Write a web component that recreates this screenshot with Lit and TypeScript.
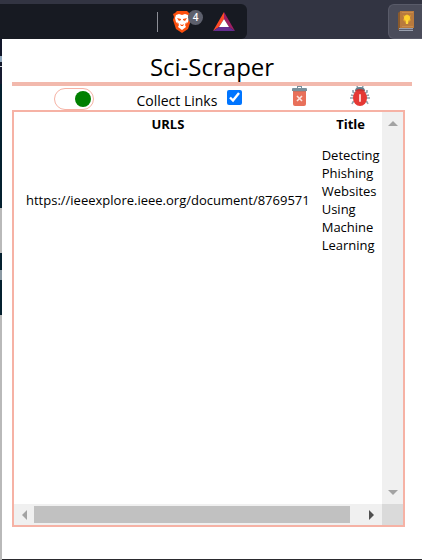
import { LitElement, html, css, svg } from "lit";
import { customElement, property, state } from "lit/decorators.js";

const braveLogo = svg`
  <svg viewBox="0 0 20 24" width="20" height="24" aria-hidden="true">
    <path fill="#fb4f0e" d="M5 1h10l2 2 2 1-1 3 1 3-3 9-6 4-6-4L1 10l1-3-1-3 2-1z"/>
    <path fill="#fff" d="M4 5l3-1 3 1 3-1 3 1 1 3-1 4-3 3 1 2-4 3-4-3 1-2-3-3-1-4z"/>
    <path fill="#fb4f0e" d="M5 8l4 1v1l-2 1zM15 8l-4 1v1l2 1zM8 14l2 1 2-1-1 2H9zM5 12l2 2-1 1zM15 12l-2 2 1 1z"/>
  </svg>`;

const batLogo = svg`
  <svg viewBox="0 0 22 20" width="22" height="20" aria-hidden="true">
    <path fill="#ff4a26" d="M11 0v7l-5 8-6 4z"/>
    <path fill="#9e1f63" d="M11 0l11 19-6-4-5-8z"/>
    <path fill="#662d91" d="M0 19l6-4h10l6 4z"/>
    <path fill="#fff" d="M11 7l5 8H6z"/>
  </svg>`;

const bookIcon = svg`
  <svg viewBox="0 0 16 21" width="16" height="21" aria-hidden="true">
    <path fill="#8a5a2c" d="M1 1l2-1v17l-2 2H0V2z"/>
    <path fill="#b87a3d" d="M2 0h14v17H2z"/>
    <path fill="#c98b4b" d="M4 1h11v1H4zM4 15h11v1H4z"/>
    <path fill="#9aa0ae" d="M1 17h14v1H1zM1 19h14v1H1z"/>
    <path fill="#5d5f70" d="M1 18h14v1H1z"/>
    <path fill="#dd9f30" d="M5 4l2 1 2-2 2 2 2-1-1 3 1 2-2 2-1 2H8l-1-2-2-2 1-2z"/>
    <circle cx="9" cy="7" r="3" fill="#ffd02b"/>
    <path fill="#ffd93b" d="M8 9h2v4H8z"/>
  </svg>`;

const trashIcon = svg`
  <svg viewBox="0 0 20 20" width="20" height="20" aria-hidden="true">
    <path fill="#78909c" d="M9 0h5v2h4q1 0 1 1v2H4V3q0-1 1-1h4zm1 1v1h3V1z"/>
    <path fill="#e8705a" d="M5 5h13v13q0 2-2 2H7q-2 0-2-2z"/>
    <path fill="#c9705f" d="M5 5h13v1H5z"/>
    <path stroke="#fbe4df" stroke-width="1.600" d="M9 10l5 5M14 10l-5 5"/>
  </svg>`;

const bugIcon = svg`
  <svg viewBox="0 0 20 20" width="20" height="20" aria-hidden="true">
    <path fill="none" stroke="#90a4ae" stroke-width="1.600" d="M7 0l1 3M13 0l-1 3M3 4v2l3 2M17 4v2l-3 2M0 12h20M1 9l4 1M19 9l-4 1M2 18l1-2 3-1M18 18l-1-2-3-1"/>
    <path fill="#607d8b" d="M5 5q0-4 5-4t5 4z"/>
    <ellipse cx="10" cy="12" rx="7" ry="8" fill="#e53935"/>
    <path fill="#c6322f" d="M6 4q4-2 8 0l1 2q-5-2-10 0z"/>
    <rect x="9" y="8" width="2" height="8" rx="1" fill="#ffc9c6"/>
  </svg>`;

@customElement("browser-bar")
class BrowserBar extends LitElement {
  static styles = css`
    :host {
      display: flex;
      justify-content: space-between;
      height: 39px;
      background: #323442;
      font-family: "Open Sans", "Noto Sans", sans-serif;
    }
    .address {
      display: flex;
      align-items: center;
      justify-content: flex-end;
      box-sizing: border-box;
      width: 247px;
      height: 35px;
      margin-top: 4px;
      padding: 0 12px 0 0;
      background: #171a22;
      border-radius: 0 6px 6px 0;
    }
    .divider {
      width: 1px;
      height: 20px;
      margin-right: 14px;
      background: #8c8e96;
    }
    button {
      display: flex;
      padding: 0;
      border: 0;
      background: none;
    }
    .shield {
      position: relative;
      margin-right: 21px;
    }
    .count {
      position: absolute;
      top: 0;
      left: 16px;
      width: 15px;
      height: 15px;
      border-radius: 8px;
      background: #5d606d;
      color: #fff;
      font: 600 10px/15px "Open Sans", sans-serif;
      text-align: center;
    }
    .extension {
      align-items: center;
      justify-content: center;
      box-sizing: border-box;
      width: 34px;
      height: 35px;
      margin-top: 4px;
      border: 1px solid #595b69;
      border-right: 0;
      border-radius: 6px 0 0 6px;
      background: #4a4c5a;
    }
  `;

  render() {
    return html`
      <div class="address">
        <span class="divider"></span>
        <button class="shield" aria-label="Shields">${braveLogo}<span class="count">4</span></button>
        <button aria-label="Rewards">${batLogo}</button>
      </div>
      <button class="extension" aria-label="Sci-Scraper">${bookIcon}</button>
    `;
  }
}

@customElement("scroll-frame")
class ScrollFrame extends LitElement {
  static styles = css`
    :host {
      display: grid;
      grid-template: minmax(0, 1fr) 21px / minmax(0, 1fr) 21px;
      border: 2px solid #f6b2a5;
    }
    .view {
      overflow: hidden;
    }
    .bar {
      display: flex;
      justify-content: space-between;
      background: #f0f0f0;
    }
    .vertical {
      flex-direction: column;
      padding-bottom: 2px;
    }
    .thumb {
      flex: 1;
      margin: 2px 12px 2px 0;
      background: #c1c1c1;
    }
    .corner {
      background: #dadada;
    }
    button {
      display: grid;
      place-items: center;
      width: 21px;
      height: 21px;
      padding: 0;
      border: 0;
      background: none;
      color: #a3a3a3;
    }
    .bar:not(.vertical) button {
      width: 20px;
    }
    .active {
      color: #505050;
    }
  `;

  private arrow(label: string, points: string, active = false) {
    return html`<button class=${active ? "active" : ""} aria-label=${label}>
      <svg viewBox="0 0 10 10" width="10" height="10"><polygon points=${points} fill="currentColor" /></svg>
    </button>`;
  }

  render() {
    return html`
      <div class="view"><slot></slot></div>
      <div class="bar vertical">
        ${this.arrow("Scroll up", "0,8 5,3 10,8")} ${this.arrow("Scroll down", "0,3 5,8 10,3")}
      </div>
      <div class="bar">
        ${this.arrow("Scroll left", "8,0 3,5 8,10")}
        <div class="thumb"></div>
        ${this.arrow("Scroll right", "2,0 7,5 2,10", true)}
      </div>
      <div class="corner"></div>
    `;
  }
}

@customElement("app-root")
class AppRoot extends LitElement {
  @property({ attribute: false }) papers = [
    {
      url: "https://ieeexplore.ieee.org/document/8769571",
      title: "Detecting Phishing Websites Using Machine Learning",
    },
  ];
  @state() private enabled = true;
  @state() private collectLinks = true;

  static styles = css`
    :host {
      display: flex;
      flex-direction: column;
      min-height: 100vh;
      color: #000;
      font: 13px/18px "Open Sans", "Noto Sans", sans-serif;
    }
    .page {
      display: flex;
      flex: 1;
      padding-left: 2px;
      background: linear-gradient(
        #12172b 0 17px,
        #8fa6bb 17px 23px,
        #12172b 23px 27px,
        #c8ccd2 27px 28px,
        #161a30 28px 45px,
        #04202f 45px 169px,
        #b9b9b9 169px 214px,
        #04202f 214px 231px,
        #8b99a3 231px 241px,
        #04202f 241px 276px,
        #b9b9b9 276px
      );
    }
    .popup {
      display: flex;
      flex: 1;
      flex-direction: column;
      min-width: 0;
      padding: 12px 10px 32px;
      border-bottom: 1px solid #2a2a2e;
      background: #fff;
    }
    h1 {
      margin: 0;
      border-bottom: 4px solid #f2b9ad;
      font-size: 24px;
      font-weight: 400;
      line-height: 31px;
      text-align: center;
    }
    .controls {
      display: flex;
      justify-content: space-evenly;
      height: 24px;
    }
    .toggle {
      appearance: none;
      display: flex;
      align-items: center;
      justify-content: flex-start;
      box-sizing: border-box;
      width: 40px;
      height: 22px;
      margin: 2px 0 0;
      padding: 0 2px;
      border: 1px solid #f6b2a5;
      border-radius: 11px;
    }
    .toggle:checked {
      justify-content: flex-end;
    }
    .toggle::before {
      content: "";
      width: 16px;
      height: 16px;
      border-radius: 8px;
      background: green;
    }
    .collect {
      display: flex;
      align-items: flex-start;
      gap: 10px;
      font-size: 14px;
    }
    .collect span {
      padding-top: 6px;
    }
    .collect input {
      width: 15px;
      height: 15px;
      margin: 4px 3px 0 0;
      accent-color: #0075ff;
    }
    .icon {
      display: flex;
      height: 20px;
      padding: 0;
      border: 0;
      background: none;
    }
    scroll-frame {
      flex: 1;
      margin-right: 7px;
    }
    table {
      border-collapse: collapse;
      margin-left: 6px;
    }
    th {
      padding: 3px 6px;
      font-weight: 700;
    }
    td {
      padding: 10px 6px;
    }
    .title {
      width: 59px;
    }
  `;

  render() {
    return html`
      <browser-bar></browser-bar>
      <div class="page">
        <main class="popup">
          <h1>Sci-Scraper</h1>
          <div class="controls">
            <input
              class="toggle"
              type="checkbox"
              role="switch"
              aria-label="Enable scraper"
              .checked=${this.enabled}
              @change=${() => (this.enabled = !this.enabled)}
            />
            <label class="collect">
              <span>Collect Links</span>
              <input
                type="checkbox"
                .checked=${this.collectLinks}
                @change=${() => (this.collectLinks = !this.collectLinks)}
              />
            </label>
            <button class="icon" aria-label="Clear list" @click=${() => (this.papers = [])}>${trashIcon}</button>
            <button class="icon" aria-label="Report a bug">${bugIcon}</button>
          </div>
          <scroll-frame>
            <table>
              <thead>
                <tr>
                  <th>URLS</th>
                  <th class="title">Title</th>
                </tr>
              </thead>
              <tbody>
                ${this.papers.map(
                  (paper) => html`<tr>
                    <td>${paper.url}</td>
                    <td>${paper.title}</td>
                  </tr>`
                )}
              </tbody>
            </table>
          </scroll-frame>
        </main>
      </div>
    `;
  }
}
